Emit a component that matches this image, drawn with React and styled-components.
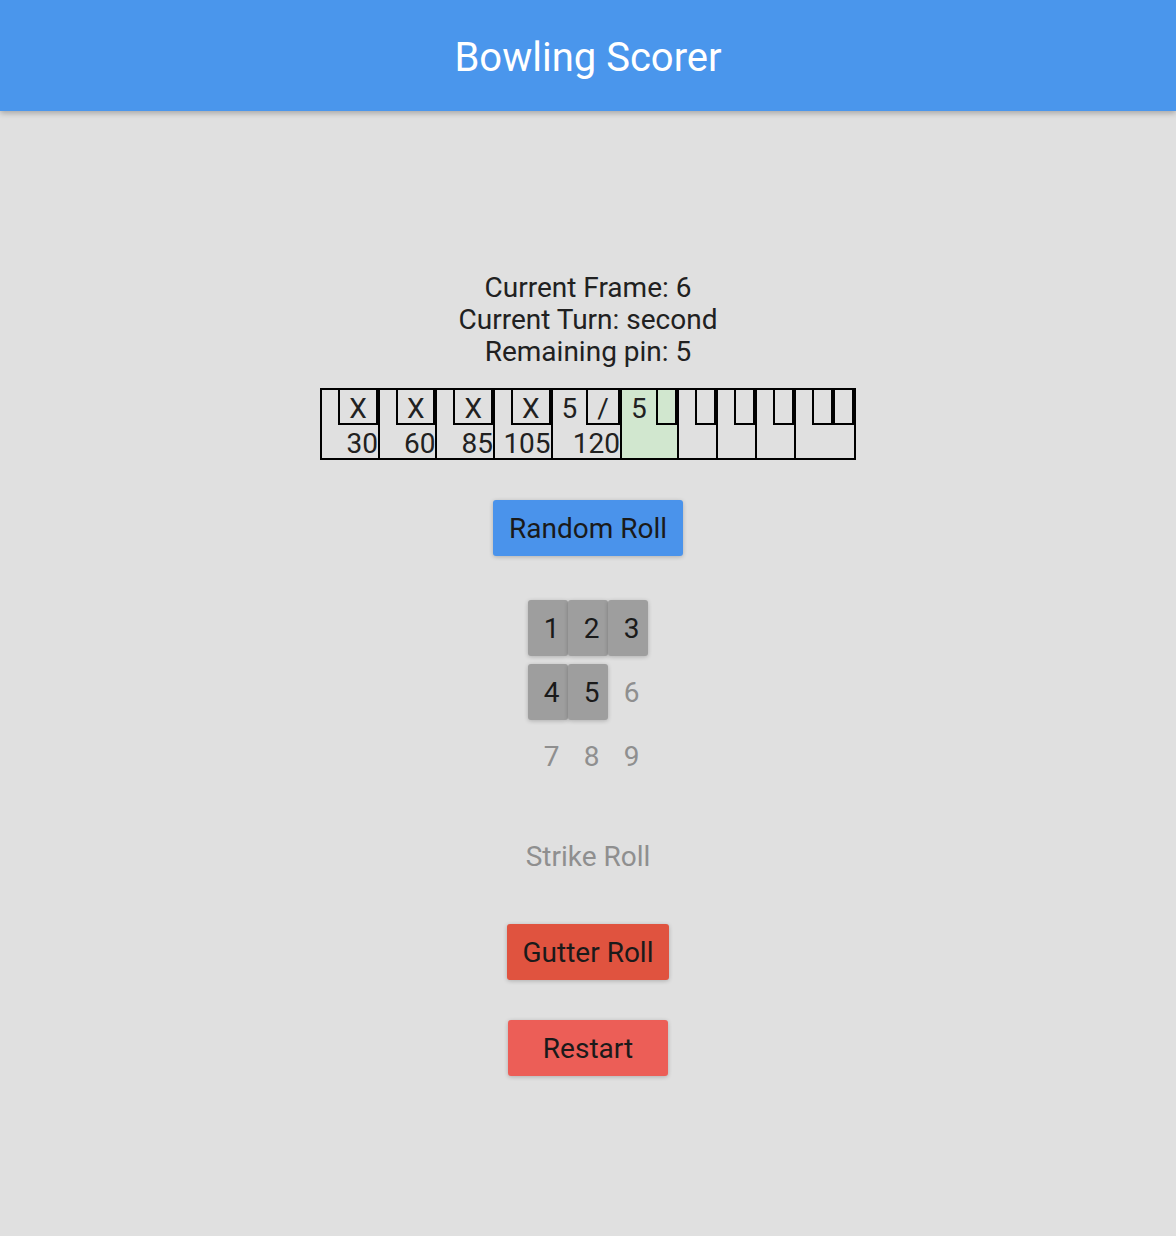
import React from "react";
import styled, { createGlobalStyle } from "styled-components";

const GlobalStyle = createGlobalStyle`
  body {
    margin: 0;
    background: #e0e0e0;
    font-family: Roboto, "Liberation Sans", sans-serif;
    color: #212121;
  }
`;

const Page = styled.div`
  min-height: 1236px;
  background: #e0e0e0;
`;

const Header = styled.header`
  height: 111px;
  background: #4a96ec;
  box-shadow: 0 2px 6px rgba(0, 0, 0, 0.28);
  display: flex;
  align-items: center;
  justify-content: center;
`;

const Title = styled.h1`
  margin: 0;
  padding-top: 4px;
  color: #fff;
  font-size: 40px;
  font-weight: 400;
`;

const Main = styled.main`
  display: flex;
  flex-direction: column;
  align-items: center;
  padding-top: 161px;
`;

const Info = styled.div`
  font-size: 28px;
  line-height: 32px;
  text-align: center;
`;

const Board = styled.div`
  display: flex;
  margin-top: 20px;
  border: 2px solid #000;
`;

const Frame = styled.div`
  display: flex;
  flex-direction: column;
  background: ${p => (p.current ? "#d1e7cf" : "transparent")};
  border-right: 2px solid #000;
  &:last-child {
    border-right: none;
  }
`;

const Balls = styled.div`
  display: flex;
  justify-content: space-between;
  height: 35px;
`;

const Ball = styled.div`
  height: 100%;
  box-sizing: border-box;
  min-width: ${p => (p.boxed ? "21px" : "16px")};
  padding: ${p => (p.empty ? "0" : "2px 9px 0")};
  font-size: 28px;
  line-height: 33px;
  text-align: center;
  border: ${p => (p.boxed ? "2px solid #000" : "none")};
  border-top: none;
`;

const Score = styled.div`
  height: 33px;
  padding-top: 2px;
  box-sizing: border-box;
  font-size: 28px;
  line-height: 33px;
  text-align: right;
`;

const Button = styled.button`
  height: 56px;
  min-width: 160px;
  padding: 0 16px;
  border: none;
  border-radius: 3px;
  font-family: Roboto, "Liberation Sans", sans-serif;
  font-size: 28px;
  color: #1a1a1a;
  background: ${p => p.bg};
  box-shadow: 0 1px 4px rgba(0, 0, 0, 0.22);
  margin-top: ${p => p.top}px;
  cursor: pointer;
  &:disabled {
    background: transparent;
    box-shadow: none;
    color: #8f8f8f;
    cursor: default;
  }
`;

const PinGrid = styled.div`
  display: grid;
  grid-template-columns: repeat(3, 40px);
  row-gap: 8px;
  margin-top: 44px;
`;

const Pin = styled.button`
  width: 40px;
  height: 56px;
  padding: 0 0 0 7px;
  border: none;
  border-radius: 3px;
  font-family: Roboto, "Liberation Sans", sans-serif;
  font-size: 28px;
  color: #1a1a1a;
  background: #9e9e9e;
  box-shadow: 0 1px 4px rgba(0, 0, 0, 0.22);
  &:disabled {
    background: transparent;
    box-shadow: none;
    color: #8f8f8f;
  }
`;

const frames = [
  { balls: ["", "X"], score: "30" },
  { balls: ["", "X"], score: "60" },
  { balls: ["", "X"], score: "85" },
  { balls: ["", "X"], score: "105" },
  { balls: ["5", "/"], score: "120" },
  { balls: ["5", ""], score: "", current: true },
  { balls: ["", ""], score: "" },
  { balls: ["", ""], score: "" },
  { balls: ["", ""], score: "" },
  { balls: ["", "", ""], score: "" }
];

const remaining = 5;

const App = () => (
  <Page>
    <GlobalStyle />
    <Header>
      <Title>Bowling Scorer</Title>
    </Header>
    <Main>
      <Info>
        <div>Current Frame: 6</div>
        <div>Current Turn: second</div>
        <div>Remaining pin: {remaining}</div>
      </Info>
      <Board>
        {frames.map((frame, i) => (
          <Frame key={i} current={frame.current}>
            <Balls>
              {frame.balls.map((b, j) => (
                <Ball key={j} boxed={j > 0} empty={b === ""}>
                  {b}
                </Ball>
              ))}
            </Balls>
            <Score>{frame.score}</Score>
          </Frame>
        ))}
      </Board>
      <Button bg="#4a93eb" top={40}>
        Random Roll
      </Button>
      <PinGrid>
        {[1, 2, 3, 4, 5, 6, 7, 8, 9].map(n => (
          <Pin key={n} disabled={n > remaining}>
            {n}
          </Pin>
        ))}
      </PinGrid>
      <Button top={44} disabled>
        Strike Roll
      </Button>
      <Button bg="#e0533f" top={40}>
        Gutter Roll
      </Button>
      <Button bg="#ec5e57" top={40}>
        Restart
      </Button>
    </Main>
  </Page>
);

export default App;
